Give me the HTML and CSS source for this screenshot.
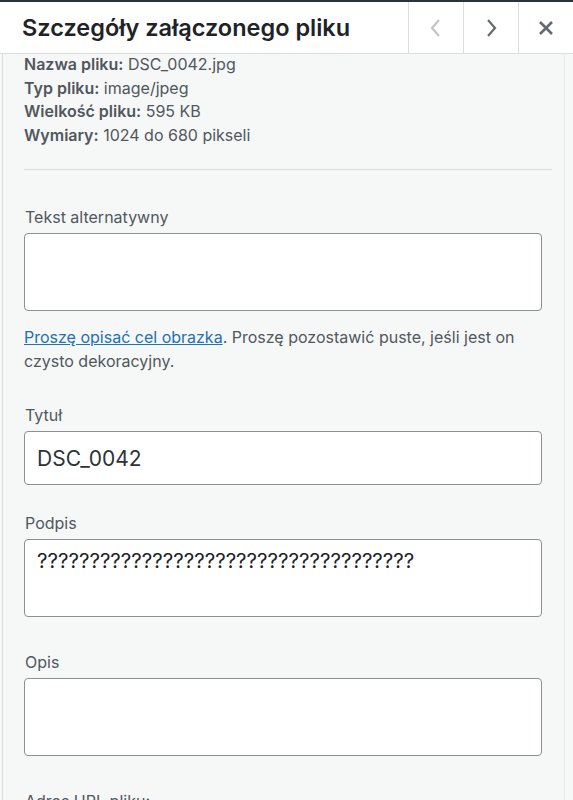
FILE: index.html
```html
<!DOCTYPE html>
<html lang="pl">
<head>
    <meta charset="UTF-8">
    <meta name="viewport" content="width=device-width, initial-scale=1.0">
    <title>Szczegóły załączonego pliku</title>
    <link rel="stylesheet" href="styles.css">
</head>
<body>
    <div class="modal">
        <header class="modal-header">
            <h1>Szczegóły załączonego pliku</h1>
            <div class="header-buttons">
                <button class="nav-button disabled" aria-label="Poprzedni">
                    <svg width="16" height="22" viewBox="0 0 16 22"><path d="M11 3 L4 11 L11 19" fill="none" stroke="currentColor" stroke-width="2.2"/></svg>
                </button>
                <button class="nav-button" aria-label="Następny">
                    <svg width="16" height="22" viewBox="0 0 16 22"><path d="M5 3 L12 11 L5 19" fill="none" stroke="currentColor" stroke-width="2.2"/></svg>
                </button>
                <button class="nav-button" aria-label="Zamknij">
                    <svg width="18" height="18" viewBox="0 0 18 18"><path d="M3 3 L15 15 M15 3 L3 15" fill="none" stroke="currentColor" stroke-width="2.6"/></svg>
                </button>
            </div>
        </header>
        <div class="content">
            <div class="file-info">
                <div><strong>Nazwa pliku:</strong> DSC_0042.jpg</div>
                <div><strong>Typ pliku:</strong> image/jpeg</div>
                <div><strong>Wielkość pliku:</strong> 595 KB</div>
                <div><strong>Wymiary:</strong> 1024 do 680 pikseli</div>
            </div>
            <hr>
            <div class="form-group alt-group">
                <label for="alt">Tekst alternatywny</label>
                <textarea id="alt" class="field"></textarea>
                <p class="help"><a href="#">Proszę opisać cel obrazka</a>. Proszę pozostawić puste, jeśli jest on czysto dekoracyjny.</p>
            </div>
            <div class="form-group title-group">
                <label for="title">Tytuł</label>
                <input type="text" id="title" class="field input" value="DSC_0042">
            </div>
            <div class="form-group caption-group">
                <label for="caption">Podpis</label>
                <textarea id="caption" class="field caption">????????????????????????????????????</textarea>
            </div>
            <div class="form-group">
                <label for="desc">Opis</label>
                <textarea id="desc" class="field"></textarea>
            </div>
            <div class="form-group">
                <label for="url">Adres URL pliku:</label>
            </div>
        </div>
    </div>
</body>
</html>
```

FILE: styles.css
```css
body {
    margin: 0;
    padding: 0;
    font-family: Inter, "Noto Sans", sans-serif;
    background-color: #f6f7f7;
    color: #50575e;
    overflow: hidden;
}
.modal {
    border-top: 2px solid #2c3338;
}
.modal-header {
    display: flex;
    align-items: stretch;
    justify-content: space-between;
    height: 51px;
    background-color: #fff;
    border-bottom: 1px solid #dcdcde;
}
.modal-header h1 {
    margin: 0;
    padding: 0 0 0 22px;
    font-size: 23.5px;
    font-weight: 600;
    color: #1d2327;
    line-height: 51px;
}
.header-buttons {
    display: flex;
}
.nav-button {
    width: 55px;
    border: none;
    border-left: 1px solid #dcdcde;
    background: #fff;
    color: #646970;
    display: flex;
    align-items: center;
    justify-content: center;
    padding: 0;
}
.nav-button.disabled {
    color: #c3c4c7;
}
.content {
    margin-left: 2px;
    margin-right: 8px;
    border-left: 1px solid #dcdcde;
    border-right: 1px solid #e8e8e9;
    padding: 0 21px;
}
.file-info {
    font-size: 16px;
    line-height: 23.5px;
    margin-top: -1px;
}
.file-info strong {
    font-weight: 600;
}
hr {
    border: none;
    border-top: 1px solid #dcdcde;
    margin: 22px 0 0 0;
    width: 528px;
}
.form-group {
    display: flex;
    flex-direction: column;
    margin-top: 34px;
}
.alt-group {
    margin-top: 36px;
}
.title-group {
    margin-top: 31px;
}
.caption-group {
    margin-top: 27px;
}
.form-group label {
    font-size: 16px;
    line-height: 22px;
    margin-bottom: 5px;
    padding-left: 1px;
    color: #50575e;
}
.field {
    box-sizing: border-box;
    width: 518px;
    height: 78px;
    border: 1px solid #8c8f94;
    border-radius: 4px;
    background: #fff;
    font-family: Inter, "Noto Sans", sans-serif;
    resize: none;
    margin: 0;
}
.input {
    height: 54px;
    font-size: 21px;
    padding: 0 12px;
    color: #2c3338;
}
.caption {
    font-size: 20.5px;
    line-height: 26px;
    padding: 8px 12px;
    color: #1d2327;
    overflow: hidden;
}
.help {
    font-size: 16px;
    line-height: 24px;
    margin: 14px 0 0 0;
}
.help a {
    color: #2271b1;
}
```
